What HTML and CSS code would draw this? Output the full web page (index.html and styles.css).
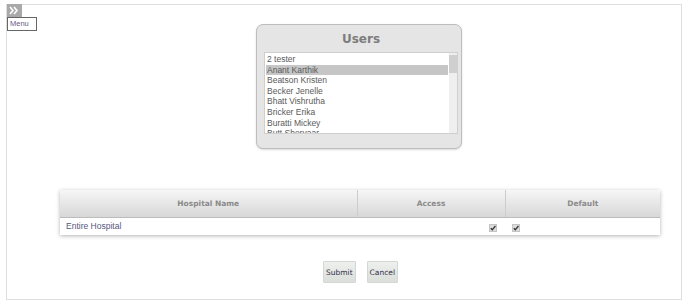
FILE: index.html
```html
<!DOCTYPE html>
<html lang="en">
<head>
    <meta charset="UTF-8">
    <title>User Hospital Access</title>
    <link rel="stylesheet" href="styles.css">
</head>
<body>

    <div class="frame">
        <div class="side">
            <div class="menu-tab">
                <svg width="15" height="13" viewBox="0 0 15 13">
                    <path d="M3 3 L6 6.5 L3 10 M7 3 L10 6.5 L7 10" fill="none" stroke="#fff" stroke-width="1.6"/>
                </svg>
            </div>
            <div class="menu-label">Menu</div>
        </div>

        <div class="content">
            <div class="users-panel">
                <h2>Users</h2>
                <div class="listbox">
                    <ul class="list">
                        <li>2 tester</li>
                        <li class="selected">Anant Karthik</li>
                        <li>Beatson Kristen</li>
                        <li>Becker Jenelle</li>
                        <li>Bhatt Vishrutha</li>
                        <li>Bricker Erika</li>
                        <li>Buratti Mickey</li>
                        <li>Butt Shervaar</li>
                    </ul>
                    <div class="scrollbar"><div class="thumb"></div></div>
                </div>
            </div>

            <table class="grid">
                <thead>
                    <tr>
                        <th class="col-name">Hospital Name</th>
                        <th class="col-access">Access</th>
                        <th class="col-default">Default</th>
                    </tr>
                </thead>
                <tbody>
                    <tr>
                        <td class="name">Entire Hospital</td>
                        <td class="access"><span class="check"><svg width="8" height="8" viewBox="0 0 8 8"><path d="M1.8 4.2 L3.3 5.8 L6.4 2" fill="none" stroke="#333" stroke-width="1.3"/></svg></span></td>
                        <td class="default"><span class="check"><svg width="8" height="8" viewBox="0 0 8 8"><path d="M1.8 4.2 L3.3 5.8 L6.4 2" fill="none" stroke="#333" stroke-width="1.3"/></svg></span></td>
                    </tr>
                </tbody>
            </table>

            <div class="actions">
                <button type="button">Submit</button>
                <button type="button">Cancel</button>
            </div>
        </div>
    </div>

</body>
</html>
```

FILE: styles.css
```css
* {
    margin: 0;
    padding: 0;
    box-sizing: border-box;
}

body {
    font-family: "Liberation Sans", Arial, sans-serif;
    background: #fff;
    color: #555;
}

/* outer frame */
.frame {
    display: flex;
    width: 676px;
    height: 296px;
    margin: 4px 0 0 6px;
    border: 1px solid #dedede;
}

/* menu tab on the left */
.side {
    width: 30px;
    flex-shrink: 0;
    margin-top: -1px;
}

.menu-tab {
    width: 15px;
    height: 13px;
    background: #a9a9a9;
}

.menu-tab svg {
    display: block;
}

.menu-label {
    width: 30px;
    height: 14px;
    border: 1px solid #666;
    background: #fff;
    font-size: 7.5px;
    line-height: 12px;
    padding-left: 2px;
    color: #6b5a86;
}

.content {
    flex: 1;
}

/* users list panel */
.users-panel {
    width: 206px;
    height: 125px;
    margin: 19px auto 0;
    padding: 0 3px 0 7px;
    background: #e5e5e5;
    border: 1px solid #bdbdbd;
    border-radius: 7px;
    box-shadow: 0 1px 2px rgba(0, 0, 0, 0.15);
}

.users-panel h2 {
    height: 27px;
    line-height: 28px;
    text-align: center;
    font-family: "DejaVu Sans", Verdana, sans-serif;
    font-size: 12px;
    font-weight: bold;
    color: #7d7d7d;
}

.listbox {
    display: flex;
    height: 82px;
    background: #fff;
    border: 1px solid #cfcfcf;
    overflow: hidden;
}

.list {
    flex: 1;
    list-style: none;
    padding: 1px 1px 0 1px;
}

.list li {
    height: 10.6px;
    line-height: 10.6px;
    font-size: 8.5px;
    padding-left: 1px;
    color: #5a5a5a;
    white-space: nowrap;
}

.list li.selected {
    background: #c6c6c6;
}

.scrollbar {
    width: 8px;
    background: #efefef;
    padding-top: 2px;
}

.thumb {
    height: 18px;
    background: #cfcfcf;
}

/* hospital table */
.grid {
    width: 600px;
    margin: 41px 0 0 23px;
    border-collapse: collapse;
    box-shadow: 0 1px 4px rgba(0, 0, 0, 0.3);
}

.grid th {
    height: 27px;
    font-family: "DejaVu Sans", Verdana, sans-serif;
    font-size: 7.5px;
    font-weight: bold;
    color: #8a8a8a;
    background: linear-gradient(#f6f6f6, #d7d7d7);
    border-right: 1px solid #cdcdcd;
    border-bottom: 1px solid #bcbcbc;
}

.grid th:last-child {
    border-right: none;
    border-top-right-radius: 3px;
}

.col-name {
    width: 297px;
}

.col-access {
    width: 148px;
}

.grid td {
    height: 18px;
    font-size: 8.5px;
    color: #55557e;
    vertical-align: middle;
}

.grid td.name {
    padding-left: 6px;
}

.grid td.access {
    text-align: right;
    padding-right: 8px;
}

.grid td.default {
    padding-left: 7px;
}

.check {
    display: inline-block;
    width: 8px;
    height: 8px;
    background: #dcdcdc;
    border: 1px solid #c4c4c4;
    vertical-align: middle;
    position: relative;
    top: 1px;
}

.check svg {
    display: block;
    margin: -1px 0 0 -1px;
}

/* buttons */
.actions {
    display: flex;
    justify-content: center;
    gap: 11px;
    margin-top: 26px;
    padding-left: 3px;
}

.actions button {
    height: 22px;
    padding: 0 2px;
    font-family: "DejaVu Sans", Verdana, sans-serif;
    font-size: 7.5px;
    color: #2f2f48;
    background: linear-gradient(#eef0ee, #dadfda);
    border: 1px solid #d4d8d4;
    border-radius: 1px;
    cursor: pointer;
}
```
